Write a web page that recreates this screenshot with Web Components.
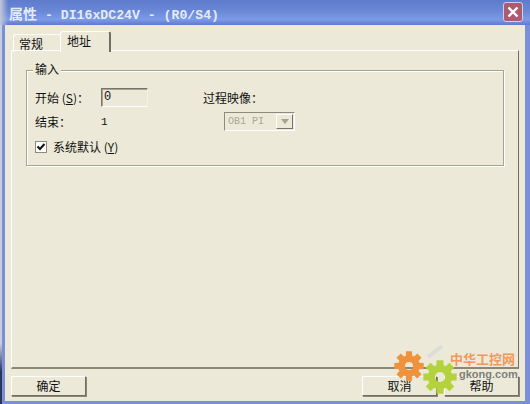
<!DOCTYPE html>
<html lang="zh">
<head>
<meta charset="utf-8">
<title>属性</title>
<style>
  html, body { margin: 0; height: 100%; overflow: hidden; }
  body { background: linear-gradient(#c9cde0 85%, #2a3358 92%); font: 12px "Noto Sans CJK SC", "Liberation Sans", sans-serif; color: #111; }
  .c { font-family: "Noto Sans CJK TC", sans-serif; }
  .big { font: bold 14px "Noto Sans CJK SC", sans-serif; }
</style>
</head>
<body>
<prop-dialog>
  <span slot="title"><span class="big">属性</span> - DI16xDC24V - (R0/S4)</span>
  <tab-strip></tab-strip>
  <group-box label="输入">
    <div style="display:grid;grid-template-columns:66px 102px 1fr;grid-template-rows:19px 19px;row-gap:5px;align-items:center">
      <span style="margin-bottom:1px">开始 (<u>S</u>)<span class="c">：</span></span>
      <sunken-input value="0"></sunken-input>
      <span style="margin-bottom:1px">过程映像<span class="c">：</span></span>
      <span>结束<span class="c">：</span></span>
      <span style="font:11px 'Liberation Mono',monospace">1</span>
      <drop-list value="OB1 PI"></drop-list>
    </div>
    <check-line>系统默认 (<u>Y</u>)</check-line>
  </group-box>
  <push-button slot="left">确定</push-button>
  <push-button slot="right">取消</push-button>
  <push-button slot="right">帮助</push-button>
</prop-dialog>
<gkong-mark></gkong-mark>

<script>
// DIALOG FRAME
const dialogTemplate = document.createElement('template');
dialogTemplate.innerHTML = `
  <style>
    :host { display: flex; flex-direction: column; width: 528px; height: 404px; margin-left: 2px; box-sizing: border-box;
      background: #7b8fd8; padding-right: 5px; padding-bottom: 3px; }
    .bar { height: 25px; flex: none; display: flex; align-items: center; justify-content: space-between;
      padding: 0 7px 0 7px; margin-right: -5px; margin-left: -2px; padding-left: 9px;
      background: linear-gradient(90deg, #c4c8d8, transparent 8px), linear-gradient(#5d7ccb, #6b88d6 45%, #7c9be6 78%, #6078d2);
      color: #e4ebf8; font: bold 13.2px "Liberation Mono", "Noto Sans CJK SC", monospace; white-space: pre; }
    .close { width: 20px; height: 20px; margin-top: -2px; box-sizing: border-box; border: 1px solid #c8d0ea; border-radius: 3px;
      background: #b05a72; display: flex; align-items: center; justify-content: center; }
    .body { flex: 1; margin-left: 3px; background: #ece9d8; padding: 25px 6px 0 6px; display: flex; flex-direction: column; min-height: 0; }
    .panel { flex: none; height: 319px; box-sizing: border-box; padding: 19px 14px 0 14px;
      border-top: 1px solid #fff; border-left: 1px solid #fff; border-right: 1px solid #716f64; border-bottom: 2px solid #8a8776; }
    .foot { display: flex; justify-content: space-between; padding-top: 7px; }
    .foot > div { display: flex; gap: 7px; }
  </style>
  <div class="bar">
    <slot name="title"></slot>
    <div class="close"><svg width="12" height="12" viewBox="0 0 12 12"><path d="M1.5 1.5 L10.5 10.5 M10.5 1.5 L1.5 10.5" stroke="#fff" stroke-width="2.4"/></svg></div>
  </div>
  <div class="body">
    <div class="panel"><slot></slot></div>
    <div class="foot">
      <div><slot name="left"></slot></div>
      <div><slot name="right"></slot></div>
    </div>
  </div>
`;
class PropDialog extends HTMLElement {
  constructor() {
    super();
    this.attachShadow({ mode: 'open' });
    this.shadowRoot.appendChild(dialogTemplate.content.cloneNode(true));
  }
}
window.customElements.define('prop-dialog', PropDialog);

// TABS, they hang over the top edge of the panel
class TabStrip extends HTMLElement {
  constructor() {
    super();
    this.attachShadow({ mode: 'open' });
    this.shadowRoot.innerHTML = `
      <style>
        :host { display: flex; align-items: flex-end; position: absolute; left: 13px; top: 31px; height: 21px; }
        .tab { box-sizing: border-box; }
        .off { width: 47px; height: 18px; padding: 0 0 0 5px; border-top: 1px solid #fff; border-left: 1px solid #fff; border-radius: 3px 0 0 0; }
        .on { width: 51px; height: 21px; padding: 0 0 0 6px; background: #ece9d8; border-top: 1px solid #fff; border-left: 1px solid #fff;
          border-right: 2px solid #716f64; border-radius: 3px 3px 0 0; }
      </style>
      <div class="tab off">常规</div>
      <div class="tab on">地址</div>
    `;
  }
}
window.customElements.define('tab-strip', TabStrip);

// GROUP BOX
class GroupBox extends HTMLElement {
  constructor() {
    super();
    this.attachShadow({ mode: 'open' });
    this.shadowRoot.innerHTML = `
      <style>
        :host { display: block; position: relative; box-sizing: border-box; height: 96px; padding: 17px 8px 0 8px;
          border: 1px solid #a5a391; box-shadow: 1px 1px 0 #fff, inset 1px 1px 0 #fff; }
        .legend { position: absolute; left: 6px; top: -11px; padding: 0 2px; background: #ece9d8; }
      </style>
      <div class="legend">${this.getAttribute('label')}</div>
      <slot></slot>
    `;
  }
}
window.customElements.define('group-box', GroupBox);

// SUNKEN TEXT FIELD
class SunkenInput extends HTMLElement {
  constructor() {
    super();
    this.attachShadow({ mode: 'open' });
    this.shadowRoot.innerHTML = `
      <style>
        :host { display: block; box-sizing: border-box; width: 47px; height: 19px; padding-left: 2px;
          font: 12px/17px "Liberation Mono", monospace;
          border: 1px solid; border-color: #77756a #f4f2e8 #fff #77756a; box-shadow: inset 1px 1px 0 #a5a391; }
      </style>
      ${this.getAttribute('value')}
    `;
  }
}
window.customElements.define('sunken-input', SunkenInput);

// DISABLED COMBO
class DropList extends HTMLElement {
  constructor() {
    super();
    this.attachShadow({ mode: 'open' });
    this.shadowRoot.innerHTML = `
      <style>
        :host { display: flex; align-items: center; justify-content: space-between; box-sizing: border-box; width: 71px; height: 19px;
          margin-left: 21px; padding: 0 1px 0 3px; color: #a9a797; font: 10px "Liberation Mono", monospace;
          border: 1px solid; border-color: #8d8b7c #fff #fff #8d8b7c; }
        .arrow { width: 17px; height: 15px; box-sizing: border-box; display: flex; align-items: center; justify-content: center;
          border: 1px solid; border-color: #fff #77756a #77756a #fff; }
        .arrow i { border: 4px solid transparent; border-top: 5px solid #a5a391; border-bottom: 0; }
      </style>
      <span>${this.getAttribute('value')}</span>
      <div class="arrow"><i></i></div>
    `;
  }
}
window.customElements.define('drop-list', DropList);

// CHECKBOX + LABEL
class CheckLine extends HTMLElement {
  constructor() {
    super();
    this.attachShadow({ mode: 'open' });
    this.shadowRoot.innerHTML = `
      <style>
        :host { display: flex; align-items: center; gap: 6px; margin-top: 7px; }
        .box { width: 12px; height: 12px; box-sizing: border-box; background: #fff; border: 1px solid #8d8b7c; display: flex; }
      </style>
      <div class="box"><svg width="10" height="10" viewBox="0 0 10 10"><path d="M1.5 4.5 L4 7 L8.5 2" fill="none" stroke="#111" stroke-width="2"/></svg></div>
      <span><slot></slot></span>
    `;
  }
}
window.customElements.define('check-line', CheckLine);

// PUSH BUTTON
class PushButton extends HTMLElement {
  constructor() {
    super();
    this.attachShadow({ mode: 'open' });
    this.shadowRoot.innerHTML = `
      <style>
        :host { display: flex; align-items: center; justify-content: center; box-sizing: border-box; width: 75px; height: 20px;
          line-height: 16px; border: 1px solid; border-color: #fff #716f64 #716f64 #fff; box-shadow: 1px 1px 0 #8a8776; }
      </style>
      <slot></slot>
    `;
  }
}
window.customElements.define('push-button', PushButton);

// SITE WATERMARK, sits on top of everything
class GkongMark extends HTMLElement {
  constructor() {
    super();
    this.attachShadow({ mode: 'open' });
    // gear outline with a real hole so the button edge shows through
    const gear = (cx, cy, r, hole, fill) => {
      let d = '';
      const inner = r * 0.72;
      for (let i = 0; i < 8; i++) {
        const a = i * Math.PI / 4;
        const pt = (rad, off) => `${(cx + rad * Math.cos(a + off)).toFixed(1)} ${(cy + rad * Math.sin(a + off)).toFixed(1)}`;
        d += `${i ? 'L' : 'M'}${pt(inner, -0.3)} L${pt(r, -0.2)} L${pt(r, 0.2)} L${pt(inner, 0.3)} `;
      }
      d += `Z M${cx - hole} ${cy} a${hole} ${hole} 0 1 0 ${hole * 2} 0 a${hole} ${hole} 0 1 0 ${-hole * 2} 0 Z`;
      return `<path d="${d}" fill="${fill}" fill-rule="evenodd"/>`;
    };
    this.shadowRoot.innerHTML = `
      <style>
        :host { position: absolute; left: 390px; top: 345px; width: 140px; height: 59px; pointer-events: none; }
        svg { position: absolute; left: 0; top: 0; filter: blur(.4px); }
        .cn { position: absolute; left: 60px; top: 6px; font: bold 13px/15px "Noto Sans CJK SC", sans-serif; color: #f0985a; white-space: nowrap; }
        .en { position: absolute; left: 69px; top: 24px; font: bold 11px/10px "Liberation Sans", sans-serif; color: #7e7e76; white-space: nowrap; }
      </style>
      <svg width="140" height="59">
        <path d="M38 12 L52 1" stroke="#dcdcd8" stroke-width="4"/>
        ${gear(19, 21, 15, 4, '#f0923c')}
        ${gear(50, 32, 17, 5, '#b4d23c')}
      </svg>
      <div class="cn">中华工控网</div>
      <div class="en">gkong.com</div>
    `;
  }
}
window.customElements.define('gkong-mark', GkongMark);
</script>
</body>
</html>
